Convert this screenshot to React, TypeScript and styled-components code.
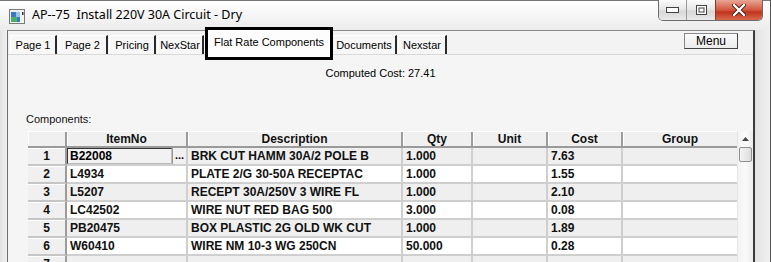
import React from 'react';
import styled, { createGlobalStyle } from 'styled-components';

const Global = createGlobalStyle`
  html, body { margin: 0; padding: 0; overflow: hidden; background: #fff; }
`;

const UI = `"Liberation Sans", Arial, sans-serif`;

const Window = styled.div`
  width: 771px;
  height: 262px;
  display: flex;
  flex-direction: column;
  background: linear-gradient(#f7f7f7, #e9e9e9 40px, #e6e6e6);
  border-right: 1px solid #555;
  box-sizing: border-box;
  overflow: hidden;
  font-family: ${UI};
`;

const TitleBar = styled.div`
  height: 30px;
  flex: none;
  display: flex;
  align-items: flex-start;
  padding-left: 9px;
  background: linear-gradient(#ffffff, #ececec);
  border-top: 1px solid #777;
  box-sizing: border-box;
`;

const TitleText = styled.div`
  font-family: "Noto Sans", "Segoe UI", sans-serif;
  font-size: 12.5px;
  color: #000;
  margin-top: 5px;
  margin-left: 7px;
  white-space: pre;
`;

const CaptionGroup = styled.div`
  margin-left: auto;
  margin-right: 7px;
  margin-top: -1px;
  display: flex;
  height: 20px;
  border: 1px solid #6b6b6b;
  border-top: none;
  border-radius: 0 0 5px 5px;
  overflow: hidden;
`;

const CaptionButton = styled.div<{ $w: number; $close?: boolean }>`
  width: ${(p) => p.$w}px;
  display: flex;
  align-items: center;
  justify-content: center;
  background: ${(p) =>
    p.$close
      ? 'linear-gradient(#e8a595, #d3573f 50%, #c0331c 60%, #d86a4f)'
      : 'linear-gradient(#fbfbfb, #e4e4e4 50%, #d6d6d6 55%, #e9e9e9)'};
  border-left: ${(p) => (p.$close ? '1px solid #8a3a2a' : '1px solid #9a9a9a')};
  &:first-child { border-left: none; }
`;

const Body = styled.div`
  flex: 1;
  display: flex;
  min-height: 0;
`;

const FrameSide = styled.div<{ $w: number }>`
  width: ${(p) => p.$w}px;
  flex: none;
  background: linear-gradient(90deg, #e2e2e2, #f0f0f0);
`;

const Client = styled.div`
  flex: 1;
  display: flex;
  flex-direction: column;
  background: #f3f3f3;
  border-left: 1px solid #6f6f6f;
  border-top: 1px solid #8a8a8a;
  border-right: 2px solid #3a3a3a;
  min-width: 0;
`;

const TabBar = styled.div`
  height: 21px;
  margin-top: 2px;
  display: flex;
  align-items: flex-end;
  padding-left: 2px;
  position: relative;
`;

const Tab = styled.div<{ $w: number; $active?: boolean }>`
  width: ${(p) => p.$w}px;
  height: 19px;
  box-sizing: border-box;
  display: flex;
  align-items: center;
  justify-content: center;
  font-size: 11px;
  color: #000;
  background: #f7f7f7;
  border-left: 1px solid #ffffff;
  border-top: 1px solid #ffffff;
  border-right: 2px solid #2a2a2a;
  margin-right: 1px;
  white-space: nowrap;
  ${(p) =>
    p.$active &&
    `
    outline: 3px solid #000;
    background: #fdfdfd;
    height: 27px;
    margin: 0 2px -3px 3px;
    border: none;
    z-index: 2;
    align-items: flex-start;
    padding-top: 6px;
  `}
`;

const MenuButton = styled.div`
  position: absolute;
  right: 15px;
  top: 0;
  width: 54px;
  height: 16px;
  box-sizing: border-box;
  border: 1px solid #888;
  border-right-color: #444;
  border-bottom-color: #444;
  background: linear-gradient(#fbfbfb, #ececec);
  font-size: 12px;
  display: flex;
  align-items: center;
  justify-content: center;
`;

const Panel = styled.div`
  flex: 1;
  border-top: 1px solid #d9d9d9;
  display: flex;
  flex-direction: column;
  background: #f5f5f5;
`;

const ComputedCost = styled.div`
  text-align: center;
  font-size: 11px;
  margin-top: 12px;
  height: 14px;
`;

const Label = styled.div`
  font-size: 11px;
  margin: 32px 0 0 18px;
  height: 14px;
  color: #111;
`;

const GridWrap = styled.div`
  margin: 4px 0 0 20px;
  display: flex;
`;

const Table = styled.div`
  display: flex;
  flex-direction: column;
`;

const COLS = '39px 121px 215px 70px 75px 75px 114px';

const HeaderRow = styled.div`
  display: grid;
  grid-template-columns: ${COLS};
  height: 17px;
  background: #f0f0f0;
  border-top: 1px solid #ffffff;
  border-bottom: 2px solid #9a9a9a;
  box-sizing: border-box;
`;

const HeaderCell = styled.div`
  font-size: 12px;
  font-weight: bold;
  text-align: center;
  line-height: 14px;
  border-right: 2px solid #9c9c9c;
  box-shadow: inset 1px 0 0 #ffffff;
  color: #111;
  &:last-child { border-right: none; }
`;

const Row = styled.div<{ $alt: boolean }>`
  display: grid;
  grid-template-columns: ${COLS};
  height: 18px;
  background: ${(p) => (p.$alt ? '#efefef' : '#ffffff')};
`;

const RowNum = styled.div`
  background: #f0f0f0;
  font-size: 12px;
  font-weight: bold;
  text-align: center;
  line-height: 16px;
  border-right: 2px solid #9c9c9c;
  border-bottom: 2px solid #c6c6c6;
  box-shadow: inset 0 1px 0 #ffffff;
  color: #111;
`;

const Cell = styled.div`
  font-size: 12px;
  font-weight: bold;
  line-height: 16px;
  padding-left: 3px;
  border-right: 2px solid #cfcfcf;
  border-bottom: 2px solid #cfcfcf;
  white-space: nowrap;
  overflow: hidden;
  color: #111;
  &:last-child { border-right: none; }
`;

const EditCell = styled.div`
  display: flex;
  border-right: 2px solid #cfcfcf;
  border-bottom: 2px solid #cfcfcf;
`;

const EditBox = styled.div`
  flex: 1;
  font-size: 12px;
  font-weight: bold;
  line-height: 14px;
  padding-left: 2px;
  border: 1px solid #333;
  border-right-color: #bbb;
  border-bottom-color: #bbb;
  background: #f2f2f2;
`;

const DotsButton = styled.div`
  width: 13px;
  font-size: 11px;
  font-weight: bold;
  line-height: 14px;
  text-align: center;
  background: #f0f0f0;
  border-left: 1px solid #999;
`;

const ScrollBar = styled.div`
  width: 15px;
  display: flex;
  flex-direction: column;
  align-items: center;
  background: linear-gradient(90deg, #f3f3f3, #fafafa 50%, #ececec);
  border-left: 1px solid #e6e6e6;
`;

const Arrow = styled.div`
  height: 16px;
  display: flex;
  align-items: center;
  justify-content: center;
`;

const Thumb = styled.div`
  width: 13px;
  height: 15px;
  box-sizing: border-box;
  border: 1px solid #8f8f8f;
  border-radius: 2px;
  background: linear-gradient(90deg, #f4f4f4, #dcdcdc);
`;

const rows = [
  ['B22008', 'BRK CUT HAMM 30A/2 POLE B', '1.000', '', '7.63', ''],
  ['L4934', 'PLATE 2/G 30-50A RECEPTAC', '1.000', '', '1.55', ''],
  ['L5207', 'RECEPT 30A/250V 3 WIRE FL', '1.000', '', '2.10', ''],
  ['LC42502', 'WIRE NUT RED BAG 500', '3.000', '', '0.08', ''],
  ['PB20475', 'BOX PLASTIC 2G OLD WK CUT', '1.000', '', '1.89', ''],
  ['W60410', 'WIRE NM 10-3 WG 250CN', '50.000', '', '0.28', ''],
  ['', '', '', '', '', ''],
];

const tabs: [string, number][] = [
  ['Page 1', 47],
  ['Page 2', 50],
  ['Pricing', 47],
  ['NexStar', 47],
];

const AppIcon = () => (
  <svg width="16" height="15" viewBox="0 0 16 15" style={{ marginTop: 8 }}>
    <rect x="0.5" y="0.5" width="15" height="14" fill="#f2f2f2" stroke="#7a7a7a" />
    <rect x="2" y="3" width="9" height="10" fill="#3b78c4" />
    <rect x="2" y="8" width="6" height="5" fill="#4bb06a" />
    <rect x="7" y="3" width="4" height="5" fill="#9bc3e8" />
    <rect x="13" y="3" width="1.5" height="3" fill="#333" />
  </svg>
);

export default function App() {
  return (
    <>
      <Global />
      <Window>
        <TitleBar>
          <AppIcon />
          <TitleText>AP--75  Install 220V 30A Circuit - Dry</TitleText>
          <CaptionGroup>
            <CaptionButton $w={27}>
              <svg width="13" height="6" viewBox="0 0 13 6">
                <rect x="0.5" y="0.5" width="12" height="5" fill="#fff" stroke="#444" />
              </svg>
            </CaptionButton>
            <CaptionButton $w={28}>
              <svg width="11" height="10" viewBox="0 0 11 10">
                <rect x="0.5" y="0.5" width="10" height="9" fill="#fff" stroke="#444" />
                <rect x="3" y="3" width="5" height="4" fill="none" stroke="#444" />
              </svg>
            </CaptionButton>
            <CaptionButton $w={46} $close>
              <svg width="14" height="12" viewBox="0 0 14 12">
                <path d="M2 1 L12 11 M12 1 L2 11" stroke="#4a1a10" strokeWidth="4" strokeLinecap="round" />
                <path d="M2 1 L12 11 M12 1 L2 11" stroke="#fff" strokeWidth="2.4" strokeLinecap="round" />
              </svg>
            </CaptionButton>
          </CaptionGroup>
        </TitleBar>
        <Body>
          <FrameSide $w={7} />
          <Client>
            <TabBar>
              {tabs.map(([t, w]) => (
                <Tab key={t} $w={w}>{t}</Tab>
              ))}
              <Tab $w={122} $active>Flat Rate Components</Tab>
              <Tab $w={65}>Documents</Tab>
              <Tab $w={49}>Nexstar</Tab>
              <MenuButton>Menu</MenuButton>
            </TabBar>
            <Panel>
              <ComputedCost>Computed Cost: 27.41</ComputedCost>
              <Label>Components:</Label>
              <GridWrap>
                <Table>
                  <HeaderRow>
                    {['', 'ItemNo', 'Description', 'Qty', 'Unit', 'Cost', 'Group'].map((h, i) => (
                      <HeaderCell key={i}>{h}</HeaderCell>
                    ))}
                  </HeaderRow>
                  {rows.map((r, i) => (
                    <Row key={i} $alt={i % 2 === 0}>
                      <RowNum>{i + 1}</RowNum>
                      {i === 0 ? (
                        <EditCell>
                          <EditBox>{r[0]}</EditBox>
                          <DotsButton>...</DotsButton>
                        </EditCell>
                      ) : (
                        <Cell>{r[0]}</Cell>
                      )}
                      {r.slice(1).map((c, j) => (
                        <Cell key={j}>{c}</Cell>
                      ))}
                    </Row>
                  ))}
                </Table>
                <ScrollBar>
                  <Arrow>
                    <svg width="7" height="4" viewBox="0 0 7 4">
                      <path d="M0 4 L3.5 0 L7 4 Z" fill="#444" />
                    </svg>
                  </Arrow>
                  <Thumb />
                </ScrollBar>
              </GridWrap>
            </Panel>
          </Client>
          <FrameSide $w={15} />
        </Body>
      </Window>
    </>
  );
}
